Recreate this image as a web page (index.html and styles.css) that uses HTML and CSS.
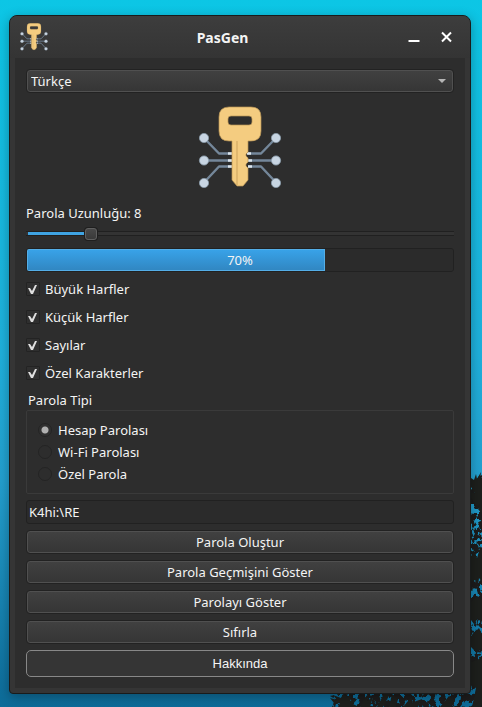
FILE: index.html
```
<!DOCTYPE html>
<html lang="tr">
<head>
<meta charset="utf-8">
<meta name="viewport" content="width=device-width, initial-scale=1">
<title>PasGen</title>
<link rel="stylesheet" href="styles.css">
</head>
<body>
<svg class="foliage" viewBox="0 0 152 237" aria-hidden="true">
  <defs>
    <filter id="leaves" x="0" y="0" width="100%" height="100%">
      <feTurbulence type="fractalNoise" baseFrequency="0.2 0.16" numOctaves="3" seed="8" result="noise"/>
      <feColorMatrix in="noise" type="matrix" values="0 0 0 0 0  0 0 0 0 0  0 0 0 0 0  -14 0 0 0 8" result="cut"/>
      <feComposite in="SourceGraphic" in2="cut" operator="in"/>
    </filter>
  </defs>
  <g fill="#1d1f1c">
    <path filter="url(#leaves)" d="M141 14L146 10L152 2V237H2L5 229L0 226L9 224H141Z"/>
    <path d="M141 8L144 10L146 4L147 9L151 2L150 9L152 8V44L148 39L150 34L146 36L141 28V22L145 24L141 17Z"/>
    <path d="M141 86L144 82L147 88L150 78L152 80V112L149 108L148 116L145 110L141 112ZM141 132L147 126L152 130V152L148 148L144 154L141 150ZM141 166L149 158L152 164V178L146 182L141 177ZM141 192L152 188V237H142L146 218L141 214Z"/>
    <path d="M0 228L7 230L3 225L11 228L13 224L18 227L22 224L20 231L27 229L23 234L29 237H8L10 233L4 233ZM30 237L34 229L38 224L37 231L43 227L40 237ZM47 237L54 224H60L53 237ZM62 224L68 229L66 237H59ZM73 237L83 225L81 233L92 229L88 237ZM110 237L119 226L125 230L121 237Z"/>
  </g>
</svg>
<svg class="symbols" aria-hidden="true">
  <symbol id="key" viewBox="0 0 84 84">
    <g fill="none" stroke="#74879a" stroke-width="2.4" stroke-linejoin="round">
      <path d="M6 32L21 47.5H34M6 54.500H34M6 76.500L21 60.500H34"/>
      <path d="M78 32L63 47.500H50M78 54.500H50M78 76.500L63 60.500H50"/>
    </g>
    <path d="M30 47.500H34M30 54.500H34M30 60.500H34M49 47.500H53M50 54.500H54M50 60.500H54" stroke="#dce5ed" stroke-width="2.400"/>
    <g fill="#c8d5e2" stroke="#8b9dac" stroke-width=".8">
      <circle cx="6" cy="32" r="4.600"/><circle cx="6" cy="54.500" r="4.600"/><circle cx="6" cy="77" r="4.600"/>
      <circle cx="78" cy="32" r="4.600"/><circle cx="78" cy="54.500" r="4.600"/><circle cx="78" cy="77" r="4.600"/>
    </g>
    <path fill="#f4cc80" stroke="#b79455" stroke-width=".7" fill-rule="evenodd" d="M31 1H53Q63 1 63 11V25Q63 35 53 35H50V46L48 48V50L50 52V56L48 58V60L50 62V74L45 80H39L34 74V35H31Q21 35 21 25V11Q21 1 31 1ZM33 10Q30 10 30 13V16Q30 19 33 19H51Q54 19 54 16V13Q54 10 51 10Z"/>
    <path d="M39 35V79" stroke="#d5ac65" stroke-width="1.300"/>
  </symbol>
</svg>
<main class="window">
  <header class="titlebar">
    <svg class="app-icon" aria-hidden="true"><use href="#key"/></svg>
    <h1 class="title">PasGen</h1>
    <div class="window-actions">
      <button class="window-button" type="button" aria-label="Simge durumuna küçült"><svg viewBox="0 0 12 12"><path d="M1 10H12" stroke-width="2"/></svg></button>
      <button class="window-button" type="button" aria-label="Kapat"><svg viewBox="0 0 12 12"><path d="M1.500 1.500L10.500 10.500M10.500 1.500L1.500 10.500" stroke-width="2"/></svg></button>
    </div>
  </header>
  <form class="content">
    <div class="select-wrap">
      <select class="raised language" aria-label="Dil"><option>Türkçe</option></select>
      <svg class="arrow" viewBox="0 0 8 4" aria-hidden="true"><path d="M0 0H8L4 4Z"/></svg>
    </div>
    <svg class="logo" aria-hidden="true"><use href="#key"/></svg>
    <label class="length-label" for="length">Parola Uzunluğu: 8</label>
    <input class="slider" id="length" type="range" min="4" max="32" value="8">
    <div class="strength">
      <progress class="meter" value="70" max="100" aria-label="Parola gücü"></progress>
      <span class="percent">70%</span>
    </div>
    <div class="checks">
      <label class="check"><input type="checkbox" checked>Büyük Harfler</label>
      <label class="check"><input type="checkbox" checked>Küçük Harfler</label>
      <label class="check"><input type="checkbox" checked>Sayılar</label>
      <label class="check"><input type="checkbox" checked>Özel Karakterler</label>
    </div>
    <fieldset class="group">
      <legend>Parola Tipi</legend>
      <div class="radios">
        <label class="radio"><input type="radio" name="type" checked>Hesap Parolası</label>
        <label class="radio"><input type="radio" name="type">Wi-Fi Parolası</label>
        <label class="radio"><input type="radio" name="type">Özel Parola</label>
      </div>
    </fieldset>
    <input class="password" type="text" value="K4hi:\RE" aria-label="Parola">
    <div class="buttons">
      <button class="raised" type="button">Parola Oluştur</button>
      <button class="raised" type="button">Parola Geçmişini Göster</button>
      <button class="raised" type="button">Parolayı Göster</button>
      <button class="raised" type="button">Sıfırla</button>
      <button class="about" type="button">Hakkında</button>
    </div>
  </form>
</main>
</body>
</html>
```
FILE: styles.css
```
* { box-sizing: border-box; }

body {
  margin: 0;
  min-height: 100vh;
  padding: 15px 11px 13px 9px;
  background: linear-gradient(#0cc6e5, #1fb0db 50%, #239fce 68%, #0d6b98);
  color: #f4f4f4;
  font: 13px/18px "Noto Sans", sans-serif;
}

button, input, select { font: inherit; color: inherit; margin: 0; }

.symbols { position: absolute; width: 0; height: 0; }

.foliage {
  position: absolute;
  right: 0;
  bottom: 0;
  width: 152px;
  height: 237px;
}

.window {
  position: relative;
  border: 1px solid #191b1b;
  border-radius: 8px 8px 4px 4px;
  background: #353535;
  padding: 0 5px 5px;
  box-shadow: 0 3px 12px rgb(0 0 0 / 30%);
}

.titlebar {
  display: grid;
  grid-template-columns: 1fr auto 1fr;
  align-items: center;
  height: 42px;
  margin: 0 -5px;
  padding: 0 17px 0 10px;
  border-radius: 7px 7px 0 0;
  background: linear-gradient(#3d3d3d, #343434);
}

.app-icon { width: 28px; height: 28px; }
.title { margin: 2px 28px 0 0; font-size: 14px; font-weight: 700; }
.window-actions { display: flex; justify-content: flex-end; gap: 20px; }
.window-button { display: flex; padding: 0; border: 0; background: none; }
.window-button svg { width: 13px; height: 12px; fill: none; stroke: #fff; }

.content {
  display: flex;
  flex-direction: column;
  background: #2d2d2d;
  padding: 11px;
}

.raised {
  width: 100%;
  height: 24px;
  padding: 0;
  border: 1px solid #222;
  border-radius: 4px;
  background: linear-gradient(#414141, #353535);
  box-shadow: inset 0 0 0 1px #505050;
}

.select-wrap { position: relative; height: 24px; }
.language { appearance: none; display: block; padding: 0 4px; }
.arrow { position: absolute; right: 8px; top: 10px; width: 8px; height: 4px; fill: #b5b5b5; }

.logo { align-self: center; width: 84px; height: 84px; margin: 13px 0; }
.length-label { align-self: flex-start; height: 20px; margin-top: 1px; }

.slider {
  appearance: none;
  width: 100%;
  height: 14px;
  margin: 3px 0 7px;
  background: linear-gradient(#3fa4e3, #3fa4e3) 2px 5px / 64px 3px no-repeat, linear-gradient(#333, #333) 0 5px / 100% 3px no-repeat, linear-gradient(#202020, #202020) 0 4px / 100% 5px no-repeat;
}
.slider::-webkit-slider-thumb {
  appearance: none;
  width: 12px;
  height: 12px;
  border: 1px solid #606060;
  border-radius: 3px;
  background: linear-gradient(#484848, #3a3a3a);
  box-shadow: 0 0 0 1px #1f1f1f;
}

.strength { display: grid; height: 24px; }
.meter, .percent { grid-area: 1 / 1; }
.percent { z-index: 1; place-self: center; }
.meter {
  appearance: none;
  width: 100%;
  height: 24px;
  border: 1px solid #212121;
  border-radius: 3px;
  overflow: hidden;
}
.meter::-webkit-progress-bar { background: #2b2b2b; }
.meter::-webkit-progress-value {
  border: 1px solid #54aee7;
  background: linear-gradient(#38a2e8, #3187c2);
}

.checks { display: grid; gap: 10px; margin: 8px 0 9px; }
.check { display: flex; align-items: center; gap: 5px; }
.check input {
  appearance: none;
  width: 14px;
  height: 14px;
  border: 1px solid #232323;
  border-radius: 1px;
  background: #2f2f2f;
}
.check input:checked::before {
  content: "";
  display: block;
  width: 12px;
  height: 12px;
  background: #dedede;
  clip-path: polygon(1px 5px, 3px 5px, 5px 8px, 8px 2px, 10px 2px, 6px 11px, 4px 11px);
}

.group { border: 0; margin: 0; padding: 0; min-width: 0; }
.group legend { padding: 0 2px; margin: 1px 0; }
.radios {
  display: grid;
  gap: 4px;
  border: 1px solid #3a3a3a;
  border-radius: 2px;
  padding: 10px 11px;
}
.radio { display: flex; align-items: center; gap: 6px; }
.radio input {
  appearance: none;
  width: 14px;
  height: 14px;
  border: 1px solid #242424;
  border-radius: 50%;
  background: #2d2d2d;
}
.radio input:checked { background: radial-gradient(circle, #b0b0b0 3px, #303030 4px); }

.password {
  width: 100%;
  height: 24px;
  margin: 6px 0;
  padding: 0 2px;
  border: 1px solid #212121;
  border-radius: 3px;
  background: #2b2b2b;
}

.buttons { display: grid; gap: 6px; }
.about {
  height: 27px;
  padding: 0;
  border: 1px solid #888;
  border-radius: 5px;
  background: #353535;
  font-family: "Liberation Sans", Arial, sans-serif;
}
```
